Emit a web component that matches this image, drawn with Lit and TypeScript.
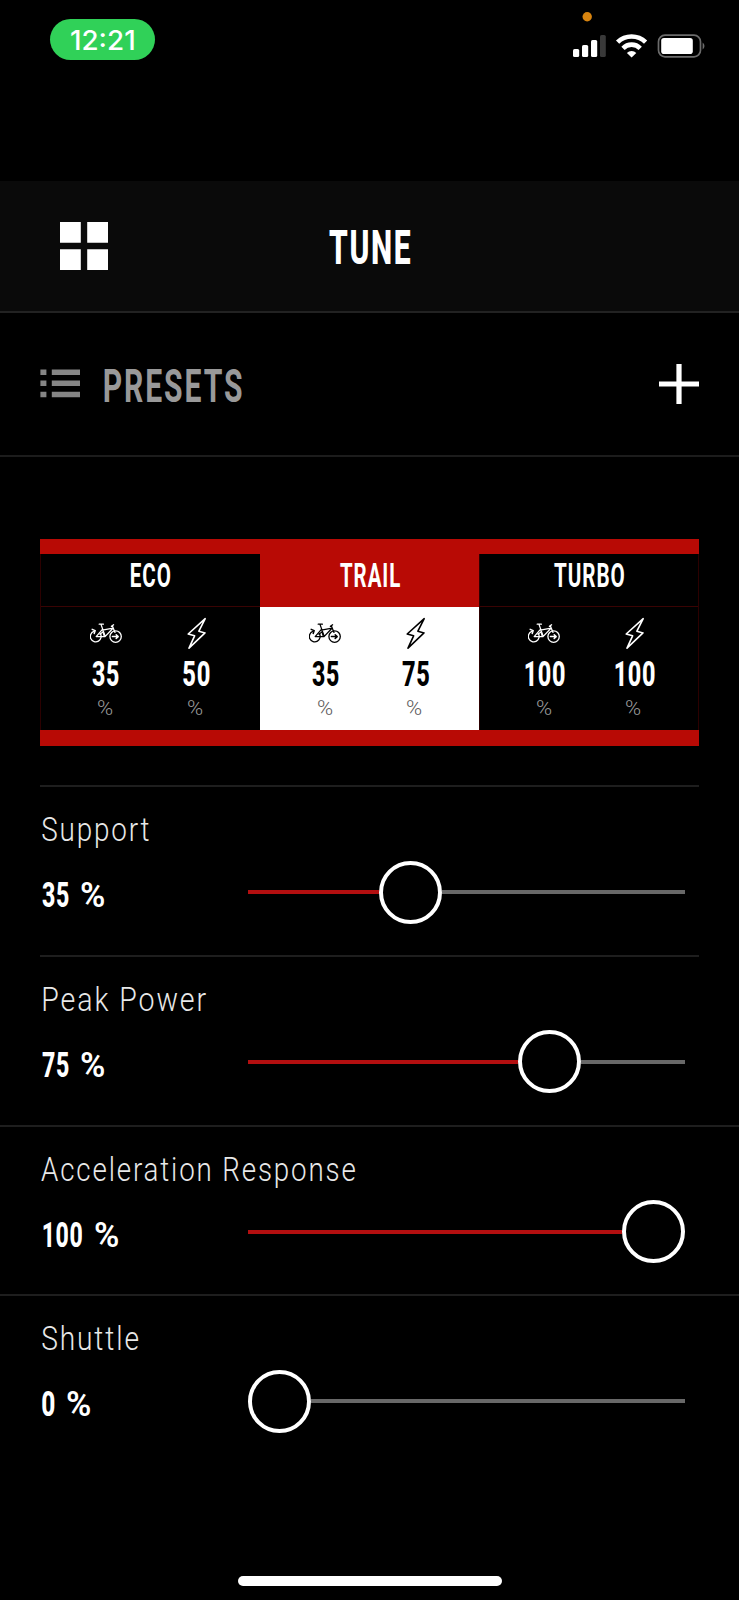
import { LitElement, html, svg, css } from "lit";
import { customElement, property } from "lit/decorators.js";
import { classMap } from "lit/directives/class-map.js";
import { styleMap } from "lit/directives/style-map.js";

const measurer = document.createElement("canvas").getContext("2d")!;

/** A line of condensed text whose ink fills the given width; its box is one cap-height tall. */
@customElement("fit-text")
export class FitText extends LitElement {
  @property() text = "";
  @property({ type: Number }) width = 0;
  @property({ type: Number }) cap = 20;
  @property({ type: Number }) weight = 600;
  @property({ type: Number }) tracking = 0;
  @property() family = "Roboto";

  static styles = css`
    :host { display: block; flex: none; }
    svg { display: block; overflow: visible; }
    text { fill: currentColor; white-space: pre; }
  `;

  render() {
    const size = this.cap / (this.family === "Inter" ? 0.727 : 0.711);
    const family = `"${this.family}", "Liberation Sans", sans-serif`;
    measurer.font = `${this.weight} ${size}px ${family}`;
    (measurer as any).letterSpacing = `${this.tracking}px`;
    const m = measurer.measureText(this.text);
    const ratio = this.width / (m.actualBoundingBoxLeft + m.actualBoundingBoxRight);
    const shift = m.actualBoundingBoxLeft * ratio;
    return html`<svg width=${this.width} height=${this.cap}>
      ${svg`<text transform="translate(${shift} ${this.cap}) scale(${ratio} 1)"
        font-family=${family} font-size=${size} font-weight=${this.weight}
        letter-spacing=${this.tracking}>${this.text}</text>`}
    </svg>`;
  }
}

const bikeIcon = html`<svg class="bike" width="32" height="21" viewBox="0.4 0 32 21" fill="none" stroke="currentColor" stroke-width="1.3" stroke-linecap="round" stroke-linejoin="round">
  <path d="M4.2 8.4A5.4 5.4 0 1 0 10.6 10.4" />
  <path d="M2.6 6.4L5.6 7.6L4.6 10.4" stroke-width="1.5" />
  <circle cx="26" cy="13.6" r="5.7" />
  <path d="M9.6 1.2H13.8M11.4 1.4L15.6 13.4M12.6 6.6L6.6 13.6H15.4L23.4 5.2L12.8 7.2M21.8 3.4L24 1.8M22.8 3L25.4 9.4" />
  <path d="M10.4 11.4L13.4 8.8L14.6 13.2" stroke-width="1.2" />
  <path d="M22.8 13.6H28.2M26.6 11.8L28.6 13.6L26.6 15.4" stroke-width="1.5" />
</svg>`;

const boltIcon = html`<svg class="bolt" width="20" height="33" viewBox="0 0 20 33" fill="none" stroke="currentColor" stroke-width="1.6" stroke-linejoin="round">
  <path d="M18.2 1.6L1.2 17L7.6 18.8L2 31.2L18 15.9L11.9 14.2Z" />
</svg>`;

interface Reading { value: string; width: number; }
interface Mode { name: string; width: number; active?: boolean; readings: Reading[]; }

@customElement("mode-card")
export class ModeCard extends LitElement {
  @property({ attribute: false }) mode!: Mode;

  static styles = css`
    :host { display: block; }
    .card { display: flex; flex-direction: column; height: 176px; box-sizing: border-box; border-left: 1px solid #2c0000; color: #fff; }
    .name { height: 53px; box-sizing: border-box; padding-top: 10.5px; border-bottom: 1px solid #3a0303; display: flex; justify-content: center; }
    .readings { flex: 1; display: flex; padding: 10px 18px 0 19px; }
    .reading { flex: 1; display: flex; flex-direction: column; align-items: center; }
    .icon { height: 34px; display: flex; align-items: center; }
    .number { margin-top: 10px; }
    .unit { margin-top: 14.5px; color: #999; }
    .reading:last-child .unit { margin-right: 3px; }
    .active { border-left-color: #b80a05; }
    .active .name { background: #b80a05; border-bottom-color: #b80a05; }
    .active .readings { background: #fff; color: #000; margin-left: -1px; padding-left: 20px; }
    .active .unit { color: #5c5c5c; }
    svg { display: block; }
  `;

  render() {
    const { name, width, active, readings } = this.mode;
    return html`<div class=${classMap({ card: true, active: !!active })}>
      <div class="name"><fit-text .text=${name} .width=${width} .cap=${23} .weight=${700} .tracking=${1.5}></fit-text></div>
      <div class="readings">
        ${readings.map((r, i) => html`<div class="reading">
          <div class="icon">${i === 0 ? bikeIcon : boltIcon}</div>
          <fit-text class="number" .text=${r.value} .width=${r.width} .cap=${25} .weight=${800} .tracking=${1}></fit-text>
          <fit-text class="unit" text="%" .width=${15} .cap=${14.5} .weight=${300}></fit-text>
        </div>`)}
      </div>
    </div>`;
  }
}

interface Setting { label: string; labelWidth: number; labelInset: number; value: string; valueWidth: number; inset: number; position: number; wide: boolean; }

@customElement("setting-row")
export class SettingRow extends LitElement {
  @property({ attribute: false }) setting!: Setting;

  static styles = css`
    :host { display: block; }
    .row { height: 169.8px; box-sizing: border-box; margin: 0 40px; border-top: 2px solid #1e1e1e; padding: 30px 14.5px 0 1.5px; }
    .wide { margin: 0; padding-left: 41.5px; padding-right: 54.5px; }
    .label { color: #e8e8e8; }
    .control { display: flex; align-items: center; margin-top: 19.5px; height: 64px; }
    .value { display: flex; width: 206.5px; gap: 13px; color: #fff; padding-top: 5px; box-sizing: border-box; }
    .slider { flex: 1; display: flex; align-items: center; }
    .before { height: 4px; background: #b30f10; }
    .after { flex: 1; height: 4px; background: #686868; }
    .thumb { flex: none; box-sizing: border-box; width: 63px; height: 63px; border: 4px solid #fff; border-radius: 50%; }
  `;

  render() {
    const s = this.setting;
    return html`<div class=${classMap({ row: true, wide: s.wide })}>
      <fit-text class="label" style=${styleMap({ marginLeft: `${s.labelInset}px` })} .text=${s.label} .width=${s.labelWidth} .cap=${23.5} .weight=${300} .tracking=${2.2}></fit-text>
      <div class="control">
        <div class="value" style=${styleMap({ paddingLeft: `${s.inset}px` })}>
          <fit-text .text=${s.value} .width=${s.valueWidth} .cap=${25} .weight=${800} .tracking=${1}></fit-text>
          <fit-text text="%" .width=${23.5} .cap=${25} .weight=${600}></fit-text>
        </div>
        <div class="slider">
          <div class="before" style=${styleMap({ width: `${s.position}px` })}></div>
          <div class="thumb"></div>
          <div class="after"></div>
        </div>
      </div>
    </div>`;
  }
}

@customElement("app-root")
export class AppRoot extends LitElement {
  static styles = css`
    :host { display: block; }
    .screen { position: relative; width: 739px; height: 1600px; background: #000; color: #fff; overflow: hidden; display: flex; flex-direction: column; font-family: Roboto, sans-serif; }
    svg { display: block; }
    .status { height: 181px; flex: none; display: flex; justify-content: space-between; align-items: flex-start; box-sizing: border-box; padding: 0 34px 0 50px; }
    .clock { margin-top: 19px; width: 105px; height: 41px; border-radius: 21px; background: #30d158; display: flex; align-items: center; justify-content: center; }
    .header { height: 132px; flex: none; box-sizing: border-box; background: #0a0a0a; border-bottom: 2px solid #222; display: grid; grid-template-columns: 1fr auto 1fr; align-items: center; padding: 0 60px; }
    .title { margin-top: 2px; }
    .header svg { margin-top: -1px; }
    .presets { height: 144px; flex: none; box-sizing: border-box; border-bottom: 2px solid #1c1c1c; display: flex; align-items: center; padding: 0 40.5px 0 40px; }
    .presets .word { margin-left: 23.5px; color: #999; margin-top: 2px; }
    .presets .list { color: #858585; margin-top: -2px; }
    .presets .plus { margin-left: auto; }
    .modes { flex: none; margin: 81.5px 40px 39.5px; border-top: 15.5px solid #b80a05; border-bottom: 16px solid #b80a05; display: grid; grid-template-columns: 220px 219px 1fr; position: relative; }
    .modes mode-card:last-child { border-right: 1px solid #2c0000; }
    .rows { flex: none; }
    .home { margin: auto auto 14px; width: 264px; height: 10px; border-radius: 5px; background: #fff; }
  `;

  private modes: Mode[] = [
    { name: "ECO", width: 39, readings: [{ value: "35", width: 26.5 }, { value: "50", width: 26.5 }] },
    { name: "TRAIL", width: 60, active: true, readings: [{ value: "35", width: 26.5 }, { value: "75", width: 27 }] },
    { name: "TURBO", width: 70, readings: [{ value: "100", width: 39.5 }, { value: "100", width: 39.5 }] },
  ];

  private settings: Setting[] = [
    { label: "Support", labelWidth: 107, labelInset: 0, value: "35", valueWidth: 26.5, inset: 0, position: 130.7, wide: false },
    { label: "Peak Power", labelWidth: 163, labelInset: 1, value: "75", valueWidth: 26.5, inset: 0, position: 269.7, wide: false },
    { label: "Acceleration Response", labelWidth: 314, labelInset: -0.5, value: "100", valueWidth: 39, inset: 1, position: 373.5, wide: true },
    { label: "Shuttle", labelWidth: 96, labelInset: 0.5, value: "0", valueWidth: 12.5, inset: 0, position: 0, wide: true },
  ];

  render() {
    return html`<div class="screen">
      <div class="status">
        <div class="clock"><fit-text text="12:21" family="Inter" .width=${62.5} .cap=${19.5} .weight=${500}></fit-text></div>
        <svg width="133" height="62" viewBox="572 0 133 62">
          <circle cx="587.2" cy="16.7" r="4.7" fill="#d8840f" />
          <g fill="#fff">
            <rect x="573" y="49" width="6.2" height="8" rx="1.6" />
            <rect x="582" y="45" width="6.2" height="12" rx="1.6" />
            <rect x="591" y="40" width="6.2" height="17" rx="1.6" />
            <rect x="600" y="35" width="5.8" height="22" rx="1.6" fill="#393939" />
          </g>
          <g fill="none" stroke="#fff" stroke-width="4.6">
            <path d="M617.6 42.2A20 20 0 0 1 645.6 42.2" />
            <path d="M623 48.3A12 12 0 0 1 640.2 48.3" />
          </g>
          <path d="M631.6 57.4L626.9 52.9A6.6 6.6 0 0 1 636.3 52.9Z" fill="#fff" />
          <rect x="658.5" y="35.2" width="42" height="21.6" rx="6.5" fill="none" stroke="#6c6c6c" stroke-width="1.7" />
          <rect x="661.2" y="38" width="31.6" height="16" rx="2.8" fill="#fff" />
          <path d="M702.6 42.6A4 4 0 0 1 702.6 49.4Z" fill="#6c6c6c" />
        </svg>
      </div>
      <div class="header">
        <svg width="48" height="48" viewBox="0 0 48 48" fill="#fff">
          <path d="M0 0H20.8V20.8H0ZM27.2 0H48V20.8H27.2ZM0 27.2H20.8V48H0ZM27.2 27.2H48V48H27.2Z" />
        </svg>
        <fit-text class="title" text="TUNE" .width=${81} .cap=${34} .weight=${800} .tracking=${2.5}></fit-text>
      </div>
      <div class="presets">
        <svg class="list" width="40" height="29" viewBox="0 0 40 29" fill="currentColor">
          <path d="M.4 .5H6.4V6H.4ZM11.8 .5H40V6H11.8ZM.4 11.5H6.4V17H.4ZM11.8 11.5H40V17H11.8ZM.4 22.7H6.4V28.3H.4ZM11.8 22.7H40V28.3H11.8Z" />
        </svg>
        <fit-text class="word" text="PRESETS" .width=${138} .cap=${33.5} .weight=${700} .tracking=${3}></fit-text>
        <svg class="plus" width="40" height="40" viewBox="0 0 40 40" fill="#fff">
          <path d="M17.4 0H22.6V17.4H40V22.6H22.6V40H17.4V22.6H0V17.4H17.4Z" />
        </svg>
      </div>
      <div class="modes">${this.modes.map((m) => html`<mode-card .mode=${m}></mode-card>`)}</div>
      <div class="rows">${this.settings.map((s) => html`<setting-row .setting=${s}></setting-row>`)}</div>
      <div class="home"></div>
    </div>`;
  }
}
